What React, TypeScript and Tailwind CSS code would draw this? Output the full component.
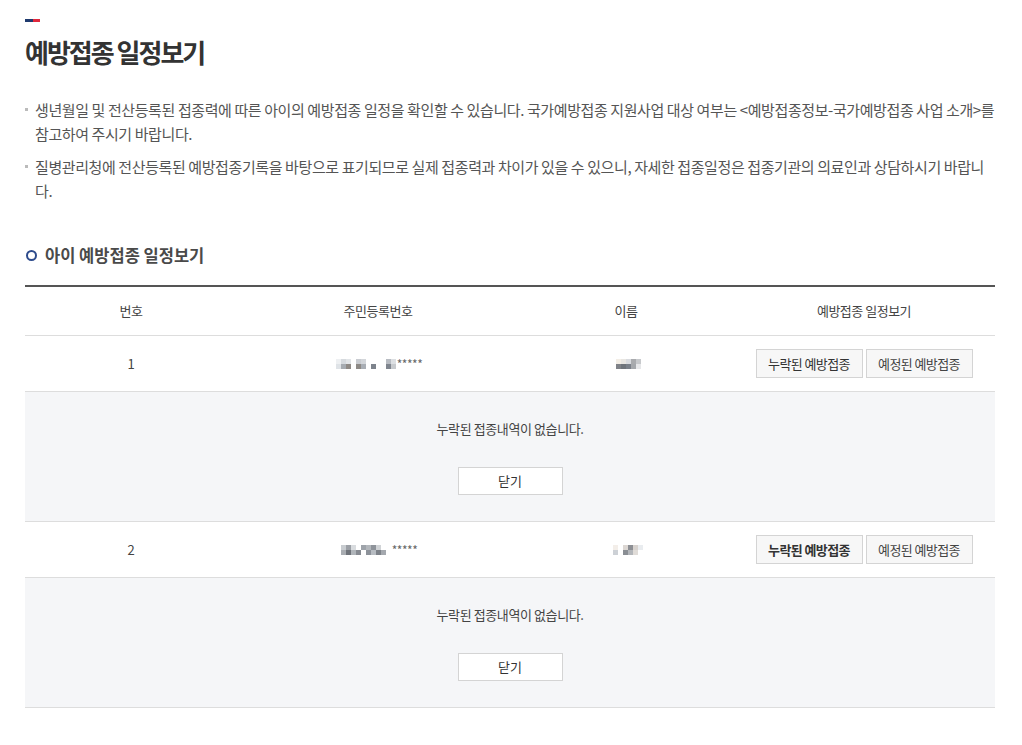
import React from 'react';

const font = { fontFamily: '"Noto Sans CJK KR", "Noto Sans", sans-serif' };

// blurred (masked) personal data, drawn as pixel blocks
function Masked({ top, bottom }: { top: string[]; bottom: string[] }) {
  return (
    <span className="inline-flex flex-col">
      <span className="flex">
        {top.map((c, i) => (
          <span key={i} className="inline-block h-[5px] w-[5px]" style={{ backgroundColor: c }} />
        ))}
      </span>
      <span className="flex">
        {bottom.map((c, i) => (
          <span key={i} className="inline-block h-[5px] w-[5px]" style={{ backgroundColor: c }} />
        ))}
      </span>
    </span>
  );
}

const rows = [
  {
    no: 1,
    rrnTop: ['#eef0f2', '#d6dade', '#e2e5e8', '#fff', '#c9ccd1', '#d3d6da', '#fff', '#fff', '#fff', '#fff', '#b8bcc2', '#dcdfe2'],
    rrnBottom: ['#dfe3e7', '#a6abb1', '#8f8a86', '#fff', '#8e8a86', '#a9aeb5', '#fff', '#7d838c', '#fff', '#fff', '#7f858e', '#c7cacd'],
    nameTop: ['#f3eee6', '#e8e6e2', '#d9dbdf', '#a9abae', '#c7c9cc'],
    nameBottom: ['#7f8288', '#6f747b', '#7a8089', '#a5a8ac', '#e6e7e9'],
    boldFirst: false,
  },
  {
    no: 2,
    rrnTop: ['#c8ccd0', '#9ca0a6', '#d9dcdf', '#fff', '#9ea3aa', '#b3b7bc', '#8e939a', '#d0d3d6', '#fff', '#fff'],
    rrnBottom: ['#a9adb2', '#6f737a', '#b0b5ba', '#878b92', '#fff', '#8d929a', '#b7bcc2', '#7d8289', '#a4a8ae', '#fff'],
    nameTop: ['#f3eee9', '#fff', '#dcd7d3', '#8d8f94', '#d7d2ce', '#e9ecef'],
    nameBottom: ['#cdd1d6', '#fff', '#8a8e94', '#b3b6ba', '#e0dcd8', '#fff'],
    boldFirst: true,
  },
];

export default function App() {
  return (
    <div className="min-h-screen bg-white pl-[25px] pr-[27px] pt-[19px]" style={font}>
      {/* flag mark */}
      <div className="flex h-[3px] w-[15px]">
        <div className="w-[8px] bg-[#1f3a6e]" />
        <div className="w-[7px] bg-[#e0283c]" />
      </div>

      <h1 className="mt-[13px] text-[26px] font-bold leading-[34px] tracking-[-2px] text-[#333]">예방접종 일정보기</h1>

      {/* notices */}
      <ul className="mt-[29px] flex flex-col gap-[9px] text-[15px] leading-[24px] tracking-[-0.4px] text-[#555]">
        <li className="flex">
          <span className="mt-[10px] mr-[7px] h-[3px] w-[3px] shrink-0 bg-[#bbb]" />
          <span>
            생년월일 및 전산등록된 접종력에 따른 아이의 예방접종 일정을 확인할 수 있습니다. 국가예방접종 지원사업 대상 여부는 &lt;예방접종정보-국가예방접종 사업 소개&gt;를 참고하여 주시기 바랍니다.
          </span>
        </li>
        <li className="flex">
          <span className="mt-[10px] mr-[7px] h-[3px] w-[3px] shrink-0 bg-[#bbb]" />
          <span>
            질병관리청에 전산등록된 예방접종기록을 바탕으로 표기되므로 실제 접종력과 차이가 있을 수 있으니, 자세한 접종일정은 접종기관의 의료인과 상담하시기 바랍니다.
          </span>
        </li>
      </ul>

      {/* section heading */}
      <div className="mt-[41px] flex items-center">
        <span className="ml-[1px] h-[11px] w-[11px] rounded-full border-2 border-[#2d4b8c]" />
        <h2 className="ml-[8px] text-[16.5px] font-bold leading-[22px] tracking-[0px] text-[#4a4a4a]">아이 예방접종 일정보기</h2>
      </div>

      {/* table */}
      <div className="mt-[19px] border-t-2 border-[#555] text-[13px] text-[#444]">
        <div className="grid h-[49px] grid-cols-[212px_282px_214px_1fr] items-center border-b border-[#ddd] text-center tracking-[-0.5px]">
          <div>번호</div>
          <div>주민등록번호</div>
          <div>이름</div>
          <div>예방접종 일정보기</div>
        </div>

        {rows.map((r) => (
          <React.Fragment key={r.no}>
            <div className="grid h-[56px] grid-cols-[212px_282px_214px_1fr] items-center border-b border-[#ddd] text-center">
              <div>{r.no}</div>
              <div className="flex items-center justify-center pl-[2px]">
                <Masked top={r.rrnTop} bottom={r.rrnBottom} />
                <span className="ml-[1px] text-[12px] tracking-[-0.5px] text-[#666]">*****</span>
              </div>
              <div className="flex items-center justify-center pl-[4px]">
                <Masked top={r.nameTop} bottom={r.nameBottom} />
              </div>
              <div className="flex justify-center gap-[3px] tracking-[-0.6px]">
                <button className={`h-[29px] w-[107px] border border-[#d4d4d4] bg-[#f7f7f7] text-[#333] ${r.boldFirst ? 'font-bold' : ''}`}>
                  누락된 예방접종
                </button>
                <button className="h-[29px] w-[107px] border border-[#d4d4d4] bg-[#f7f7f7] text-[#444]">예정된 예방접종</button>
              </div>
            </div>
            <div className="flex h-[130px] flex-col items-center border-b border-[#ddd] bg-[#f5f6f8] pt-[27px]">
              <p className="leading-[20px] tracking-[-0.4px] text-[#444]">누락된 접종내역이 없습니다.</p>
              <button className="mt-[28px] h-[28px] w-[105px] border border-[#d4d4d4] bg-white text-[#333]">닫기</button>
            </div>
          </React.Fragment>
        ))}
      </div>
    </div>
  );
}
